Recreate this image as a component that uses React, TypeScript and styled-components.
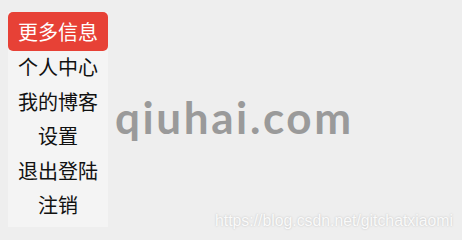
import styled, { createGlobalStyle } from 'styled-components';

const GlobalStyle = createGlobalStyle`
  html, body {
    margin: 0;
    padding: 0;
    background: #eeeeee;
  }
  body {
    width: 462px;
    height: 240px;
    overflow: hidden;
    font-family: 'Noto Sans CJK SC', 'Noto Sans', sans-serif;
  }
`;

const items = ['个人中心', '我的博客', '设置', '退出登陆', '注销'];

function App() {
  return (
    <Page>
      <GlobalStyle />
      <Menu>
        <Header>更多信息</Header>
        {items.map((item) => (
          <Item key={item}>{item}</Item>
        ))}
      </Menu>
      <Watermark>qiuhai.com</Watermark>
      <SourceMark>https://blog.csdn.net/gitchatxiaomi</SourceMark>
    </Page>
  );
}
export default App;

const Page = styled.div`
  position: relative;
  width: 462px;
  height: 240px;
  padding: 12px 0 0 8px;
  box-sizing: border-box;
`;

const Menu = styled.div`
  width: 100px;
  background: #f4f4f4;
  display: flex;
  flex-direction: column;
  padding-bottom: 3px;
`;

const Header = styled.div`
  height: 39px;
  line-height: 40px;
  background: #e74136;
  border-radius: 5px;
  color: #ffffff;
  font-size: 20px;
  text-align: center;
`;

const Item = styled.div`
  height: 34.5px;
  line-height: 31px;
  color: #111111;
  font-size: 20px;
  text-align: center;
`;

const Watermark = styled.div`
  position: absolute;
  left: 115px;
  top: 92px;
  font-family: 'Lato', 'DejaVu Sans', sans-serif;
  font-weight: 700;
  font-size: 44px;
  line-height: 50px;
  letter-spacing: 2.6px;
  color: #9a9a9a;
`;

const SourceMark = styled.div`
  position: absolute;
  left: 215px;
  top: 211px;
  font-family: 'Liberation Sans', Arial, sans-serif;
  font-size: 15.8px;
  line-height: 20px;
  color: #fafafa;
  text-shadow: 0 0 2px #bdbdbd;
`;
